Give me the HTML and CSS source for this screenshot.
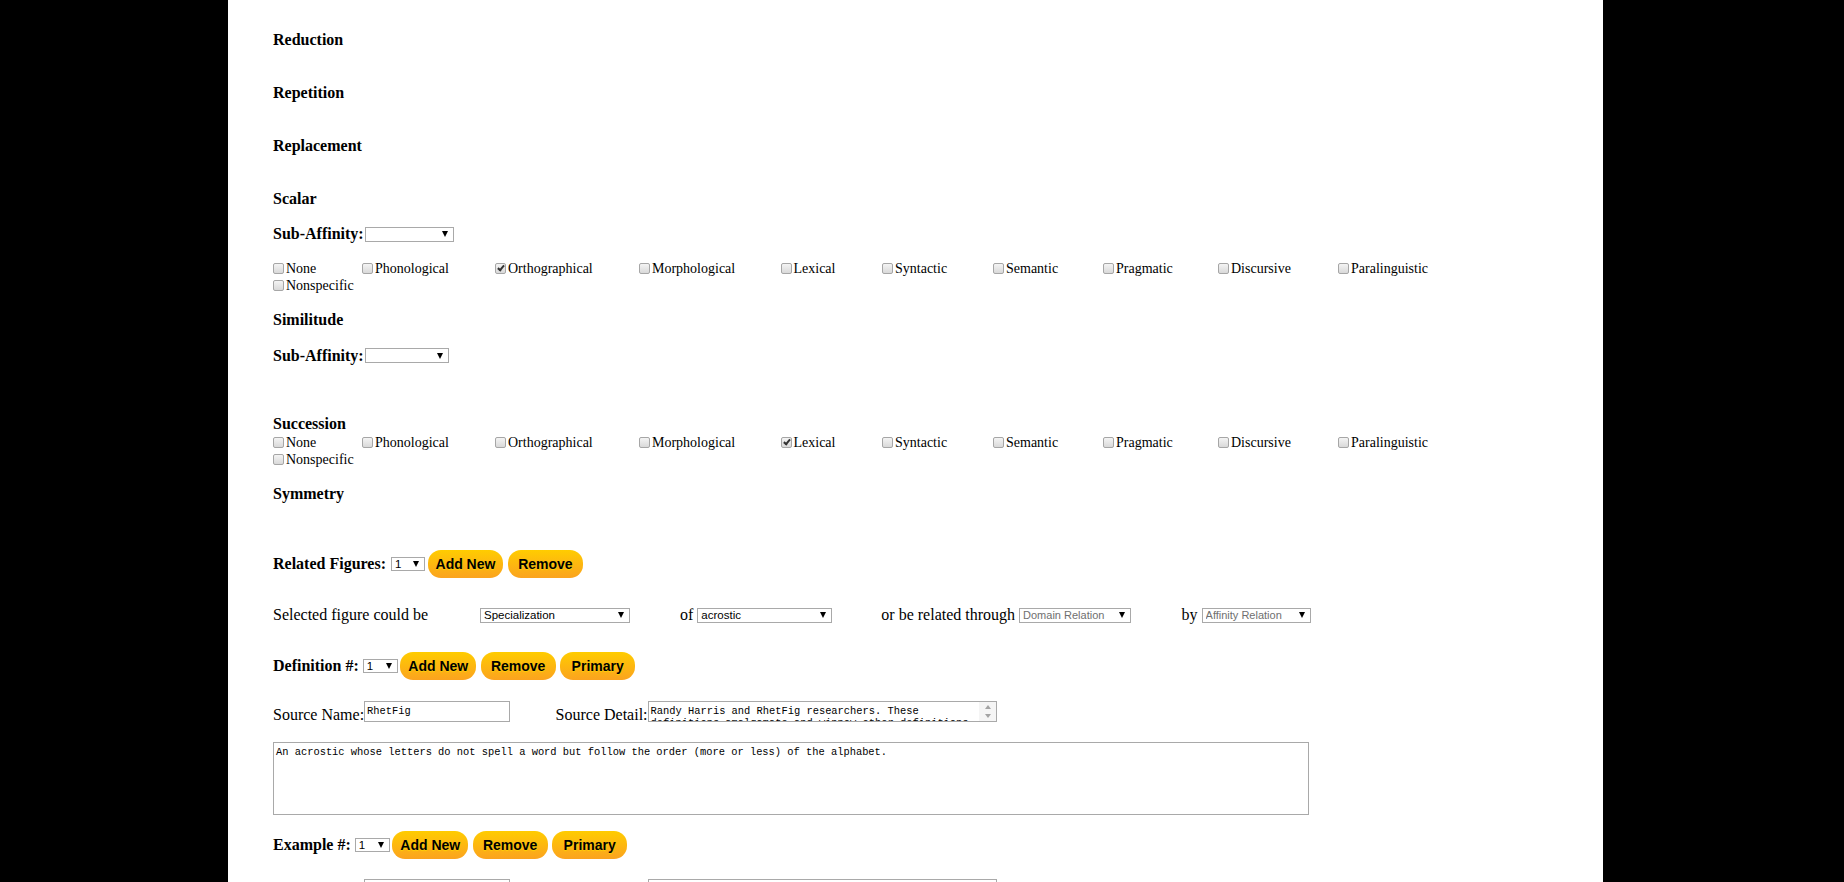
FILE: index.html
```html
<!DOCTYPE html>
<html lang="en">
<head>
<meta charset="utf-8">
<title>Figure editor</title>
<link rel="stylesheet" href="styles.css">
</head>
<body>
<div class="page">
  <div class="h">Reduction</div>
  <div class="h">Repetition</div>
  <div class="h">Replacement</div>
  <div class="h h-tight">Scalar</div>
  <div class="sub-row">Sub-Affinity:<span class="sel sel-sub1"><select><option></option></select></span></div>
  <div class="cbs">
    <label class="cb-item"><input type="checkbox">None</label>
    <label class="cb-item"><input type="checkbox">Phonological</label>
    <label class="cb-item"><input type="checkbox" checked>Orthographical</label>
    <label class="cb-item"><input type="checkbox">Morphological</label>
    <label class="cb-item"><input type="checkbox">Lexical</label>
    <label class="cb-item"><input type="checkbox">Syntactic</label>
    <label class="cb-item"><input type="checkbox">Semantic</label>
    <label class="cb-item"><input type="checkbox">Pragmatic</label>
    <label class="cb-item"><input type="checkbox">Discursive</label>
    <label class="cb-item"><input type="checkbox">Paralinguistic</label>
    <label class="cb-item"><input type="checkbox">Nonspecific</label>
  </div>
  <div class="h h-tight2">Similitude</div>
  <div class="sub-row sub-row-last">Sub-Affinity:<span class="sel sel-sub2"><select><option></option></select></span></div>
  <div class="h h-flush">Succession</div>
  <div class="cbs">
    <label class="cb-item"><input type="checkbox">None</label>
    <label class="cb-item"><input type="checkbox">Phonological</label>
    <label class="cb-item"><input type="checkbox">Orthographical</label>
    <label class="cb-item"><input type="checkbox">Morphological</label>
    <label class="cb-item"><input type="checkbox" checked>Lexical</label>
    <label class="cb-item"><input type="checkbox">Syntactic</label>
    <label class="cb-item"><input type="checkbox">Semantic</label>
    <label class="cb-item"><input type="checkbox">Pragmatic</label>
    <label class="cb-item"><input type="checkbox">Discursive</label>
    <label class="cb-item"><input type="checkbox">Paralinguistic</label>
    <label class="cb-item"><input type="checkbox">Nonspecific</label>
  </div>
  <div class="h h-end">Symmetry</div>

  <div class="btn-row">
    <span class="row-label">Related Figures:</span>
    <span class="sel sel-num sel-num-wide"><select><option>1</option></select></span>
    <button class="btn">Add New</button>
    <button class="btn">Remove</button>
  </div>

  <div class="rel-row">
    <span class="rel-lead">Selected figure could be</span>
    <span class="sel sel-spec"><select><option>Specialization</option></select></span>
    <span class="rel-word">of</span>
    <span class="sel sel-acro"><select><option>acrostic</option></select></span>
    <span class="rel-word">or be related through</span>
    <span class="sel sel-dom sel-muted"><select><option>Domain Relation</option></select></span>
    <span class="rel-word">by</span>
    <span class="sel sel-aff sel-muted"><select><option>Affinity Relation</option></select></span>
  </div>

  <div class="btn-row btn-row-def">
    <span class="row-label">Definition #:</span>
    <span class="sel sel-num"><select><option>1</option></select></span>
    <button class="btn">Add New</button>
    <button class="btn">Remove</button>
    <button class="btn">Primary</button>
  </div>

  <div class="src-row">
    <span class="src-label">Source Name:</span>
    <textarea class="ta ta-name">RhetFig</textarea>
    <span class="src-label">Source Detail:</span>
    <span class="ta-wrap">
      <textarea class="ta ta-detail">Randy Harris and RhetFig researchers. These definitions amalgamate and winnow other definitions from the literature.</textarea>
      <span class="sb"><span class="sb-up"></span><span class="sb-down"></span></span>
    </span>
  </div>

  <textarea class="ta ta-def">An acrostic whose letters do not spell a word but follow the order (more or less) of the alphabet.</textarea>

  <div class="btn-row btn-row-ex">
    <span class="row-label">Example #:</span>
    <span class="sel sel-num"><select><option>1</option></select></span>
    <button class="btn">Add New</button>
    <button class="btn">Remove</button>
    <button class="btn">Primary</button>
  </div>

  <div class="src-row">
    <span class="src-label">Source Name:</span>
    <textarea class="ta ta-name"></textarea>
    <span class="src-label">Source Detail:</span>
    <span class="ta-wrap">
      <textarea class="ta ta-detail"></textarea>
    </span>
  </div>
</div>
</body>
</html>
```

FILE: styles.css
```css
html {
  background: #000;
}
html, body {
  overflow: hidden;
}
body {
  margin: 0;
  font-family: "Liberation Serif", "Times New Roman", serif;
  color: #000;
}
.page {
  margin-left: 228px;
  width: 1375px;
  min-height: 882px;
  box-sizing: border-box;
  background: #fff;
  padding: 30.5px 0 0 45px;
}

/* headings */
.h {
  font-weight: bold;
  font-size: 16px;
  line-height: 18px;
  margin-bottom: 35.2px;
}
.h-tight { margin-bottom: 17px; }
.h-tight2 { margin-bottom: 18px; }
.h-flush { margin-bottom: 1px; }
.h-end { margin-bottom: 47px; }

/* sub affinity */
.sub-row {
  display: flex;
  align-items: center;
  height: 18px;
  font-weight: bold;
  font-size: 16px;
  line-height: 18px;
  margin-bottom: 16.5px;
}
.sub-row .sel { margin-left: 1px; }
.sub-row-last { margin-bottom: 50.5px; }

/* checkbox grid */
.cbs {
  display: grid;
  grid-template-columns: 89px 133px 144px 141.5px 101.5px 111px 110px 115px 120px auto;
  justify-content: start;
  font-size: 14px;
  line-height: 17px;
  margin-bottom: 17px;
}
.cb-item {
  display: flex;
  align-items: center;
  white-space: nowrap;
}
.cb-item input {
  -webkit-appearance: none;
  appearance: none;
  position: relative;
  width: 11px;
  height: 11px;
  margin: 0 2px 0 0;
  box-sizing: border-box;
  border: 1px solid #a6a6a6;
  border-radius: 2px;
  background: linear-gradient(#f4f4f4, #d9d9d9);
  flex: none;
}
.cb-item input:checked::after {
  content: "";
  position: absolute;
  left: 3px;
  top: 0px;
  width: 2px;
  height: 5px;
  border-right: 2px solid #333;
  border-bottom: 2px solid #333;
  transform: rotate(40deg);
}

/* selects */
.sel {
  position: relative;
  display: inline-block;
  flex: none;
}
.sel select {
  -webkit-appearance: none;
  appearance: none;
  display: block;
  width: 100%;
  height: 15px;
  margin: 0;
  padding: 0 14px 0 3px;
  box-sizing: border-box;
  border: 1px solid #a9a9a9;
  border-radius: 0;
  background: #fff;
  color: #000;
  font-family: "Liberation Sans", Arial, sans-serif;
  font-size: 11.5px;
  line-height: 13px;
}
.sel::after {
  content: "";
  position: absolute;
  right: 6px;
  top: 50%;
  margin-top: -3px;
  border-left: 3px solid transparent;
  border-right: 3px solid transparent;
  border-top: 6px solid #000;
  pointer-events: none;
}
.sel-muted select { color: #6f6f6f; font-size: 11px; }
.sel-sub1 { width: 89px; }
.sel-sub2 { width: 84px; }
.sel-num { width: 35px; margin-right: 2.5px; }
.sel-num select { height: 14px; }
.sel-num-wide { width: 34px; margin-left: 1px; }
.sel-spec { width: 150px; margin-right: 50px; }
.sel-acro { width: 134.5px; margin-right: 49.5px; }
.sel-dom { width: 112px; margin-right: 50.5px; }
.sel-aff { width: 109px; }

/* button rows */
.btn-row {
  display: flex;
  align-items: center;
  height: 28px;
  margin-bottom: 28px;
}
.btn-row-def { margin-bottom: 20.5px; }
.btn-row-ex { margin-bottom: 20.3px; }
.row-label {
  font-weight: bold;
  font-size: 16px;
  line-height: 18px;
  margin-right: 4px;
}
.btn {
  height: 28px;
  min-width: 75px;
  padding: 0 8px;
  margin: 0 4.5px 0 0;
  box-sizing: border-box;
  border: 0;
  border-radius: 13px;
  background: linear-gradient(#ffcc00, #fba31f);
  color: #000;
  font-family: "Liberation Sans", Arial, sans-serif;
  font-weight: bold;
  font-size: 14px;
  text-shadow: 0 1px 1px rgba(255, 225, 0, 0.7);
}

/* relation row */
.rel-row {
  display: flex;
  align-items: center;
  height: 18px;
  font-size: 16px;
  line-height: 18px;
  margin-bottom: 28px;
  white-space: nowrap;
}
.rel-lead { width: 207px; flex: none; }
.rel-word { margin-right: 4px; }

/* source rows */
.src-row {
  display: flex;
  align-items: flex-end;
  height: 21px;
  font-size: 16px;
  margin-bottom: 20.8px;
}
.src-label {
  line-height: 14px;
  white-space: nowrap;
}
.ta {
  box-sizing: border-box;
  margin: 0;
  border: 1px solid #a9a9a9;
  padding: 3px 2px 0 2px;
  background: #fff;
  color: #000;
  font-family: "Liberation Mono", "Courier New", monospace;
  font-size: 10.4px;
  line-height: 12px;
  resize: none;
  overflow: hidden;
}
.ta-name {
  width: 146px;
  height: 21px;
  margin-right: 45.5px;
}
.ta-wrap {
  position: relative;
  display: block;
  width: 349.5px;
  height: 21px;
}
.ta-detail {
  display: block;
  width: 100%;
  height: 21px;
  padding-right: 18px;
}
.sb {
  position: absolute;
  top: 1px;
  right: 1px;
  bottom: 1px;
  width: 17px;
  background: #f5f5f5;
  display: flex;
  flex-direction: column;
  justify-content: space-between;
  align-items: center;
  padding: 3px 0;
  box-sizing: border-box;
}
.sb-up {
  border-left: 3.5px solid transparent;
  border-right: 3.5px solid transparent;
  border-bottom: 4px solid #a3a3a3;
}
.sb-down {
  border-left: 3.5px solid transparent;
  border-right: 3.5px solid transparent;
  border-top: 4px solid #a3a3a3;
}
.ta-def {
  display: block;
  width: 1036px;
  height: 72.5px;
  margin-bottom: 16.3px;
}
```
